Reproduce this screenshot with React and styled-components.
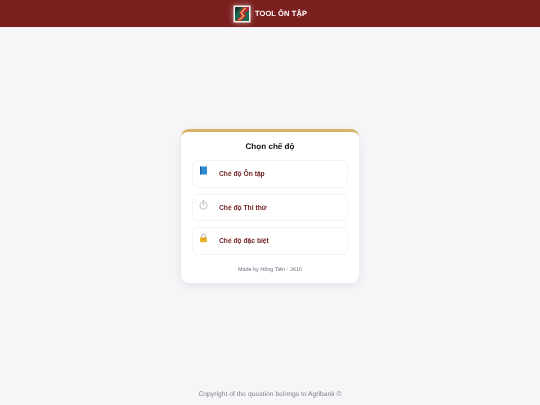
import React from "react";
import styled, { createGlobalStyle } from "styled-components";

const Global = createGlobalStyle`
  html, body { margin: 0; padding: 0; height: 100%; }
  body {
    background: #f5f6f8;
    font-family: "Liberation Sans", Arial, sans-serif;
    text-rendering: geometricPrecision;
  }
  * { box-sizing: border-box; }
`;

const Page = styled.div`
  height: 405px;
  display: flex;
  flex-direction: column;
  overflow: hidden;
  will-change: transform;
`;

const Header = styled.header`
  height: 28px;
  flex: none;
  background: #7b1e1e;
  border-bottom: 1.5px solid #f1eaea;
  display: flex;
  align-items: center;
  justify-content: center;
  gap: 4px;
`;

const Logo = styled.svg`
  width: 18px;
  height: 18px;
  display: block;
  filter: drop-shadow(0 0 3px rgba(255, 255, 255, 0.5));
`;

const Brand = styled.span`
  font-size: 7.5px;
  font-weight: 700;
  color: #fff;
  letter-spacing: 0.1px;
`;

const Main = styled.main`
  flex: 1;
  display: flex;
  align-items: center;
  justify-content: center;
`;

const Card = styled.section`
  width: 178px;
  height: 154px;
  background: #fff;
  border-top: 3px solid #d9b26a;
  border-radius: 8px;
  box-shadow: 0 3px 10px rgba(20, 30, 50, 0.08);
  padding: 9px 11px 0;
  display: flex;
  flex-direction: column;
`;

const Title = styled.h2`
  margin: 0 0 8px;
  font-size: 8.1px;
  line-height: 11px;
  font-weight: 700;
  color: #111;
  text-align: center;
`;

const Options = styled.div`
  display: flex;
  flex-direction: column;
  gap: 6px;
`;

const Option = styled.button`
  height: 27.5px;
  width: 100%;
  background: #fff;
  border: 1px solid #f3f4f6;
  border-radius: 5px;
  padding: 0 6px;
  display: flex;
  align-items: flex-start;
  cursor: pointer;
  font: inherit;
`;

const IconSlot = styled.span`
  width: 20px;
  flex: none;
  padding-top: 5px;
  display: flex;

  svg { display: block; }
`;

const Label = styled.span`
  font-size: 6.7px;
  line-height: 26.5px;
  font-weight: 700;
  color: #6e1a1a;
`;

const Credit = styled.p`
  margin: 11px 0 0;
  font-size: 5.45px;
  line-height: 8px;
  color: #6b7280;
  text-align: center;
`;

const Footer = styled.footer`
  flex: none;
  height: 21px;
  padding-top: 6px;
  font-size: 6.75px;
  line-height: 10px;
  color: #7f8287;
  text-align: center;
`;

const Book = () => (
  <svg width="9" height="9" viewBox="0 0 9 9">
    <rect x="1" y="0.5" width="7" height="8" fill="#2f8bd6" />
    <rect x="1" y="0.5" width="1.2" height="8" fill="#1b5f9e" />
  </svg>
);

const Timer = () => (
  <svg width="9" height="10" viewBox="0 0 9 10" fill="none">
    <circle cx="4.5" cy="5.6" r="3.6" fill="#fbfbfb" stroke="#b4b6ba" strokeWidth="0.8" />
    <path d="M3.5 0.8h2M4.5 0.8v1.2M4.5 5.6V3.4" stroke="#a0a3a8" strokeWidth="0.7" />
  </svg>
);

const Lock = () => (
  <svg width="9" height="10" viewBox="0 0 9 10" fill="none">
    <path d="M2.6 4.5V3a1.9 1.9 0 0 1 3.8 0v1.5" stroke="#a9a9a9" strokeWidth="0.9" />
    <rect x="1" y="4.2" width="7" height="5" rx="0.9" fill="#e9b52f" />
    <circle cx="4.5" cy="6.6" r="0.7" fill="#a9771a" />
  </svg>
);

const modes = [
  { label: "Chế độ Ôn tập", icon: <Book /> },
  { label: "Chế độ Thi thử", icon: <Timer /> },
  { label: "Chế độ đặc biệt", icon: <Lock /> },
];

export default function App() {
  return (
    <>
      <Global />
      <Page>
        <Header>
          <Logo viewBox="0 0 18 18">
            <rect x="0.5" y="0.5" width="17" height="17" fill="#f4f0ee" />
            <rect x="2" y="2" width="14" height="14" fill="#17694f" />
            <path d="M2 2 L9 2 L2 9 Z" fill="#1f3a32" />
            <path d="M10 2 L16 2 L16 5 L11.5 8.5 L13.5 11 L8 16 L2.5 16 L7.5 11 L6 8 Z" fill="#b92c37" />
            <path d="M12.5 3 L8 7.8 L10.8 10.8 L6 15" stroke="#e6c15c" strokeWidth="1.1" fill="none" />
          </Logo>
          <Brand>TOOL ÔN TẬP</Brand>
        </Header>
        <Main>
          <Card>
            <Title>Chọn chế độ</Title>
            <Options>
              {modes.map((m) => (
                <Option key={m.label} type="button">
                  <IconSlot>{m.icon}</IconSlot>
                  <Label>{m.label}</Label>
                </Option>
              ))}
            </Options>
            <Credit>Made by Hồng Tiến - 3616</Credit>
          </Card>
        </Main>
        <Footer>Copyright of the question belongs to Agribank ©</Footer>
      </Page>
    </>
  );
}
